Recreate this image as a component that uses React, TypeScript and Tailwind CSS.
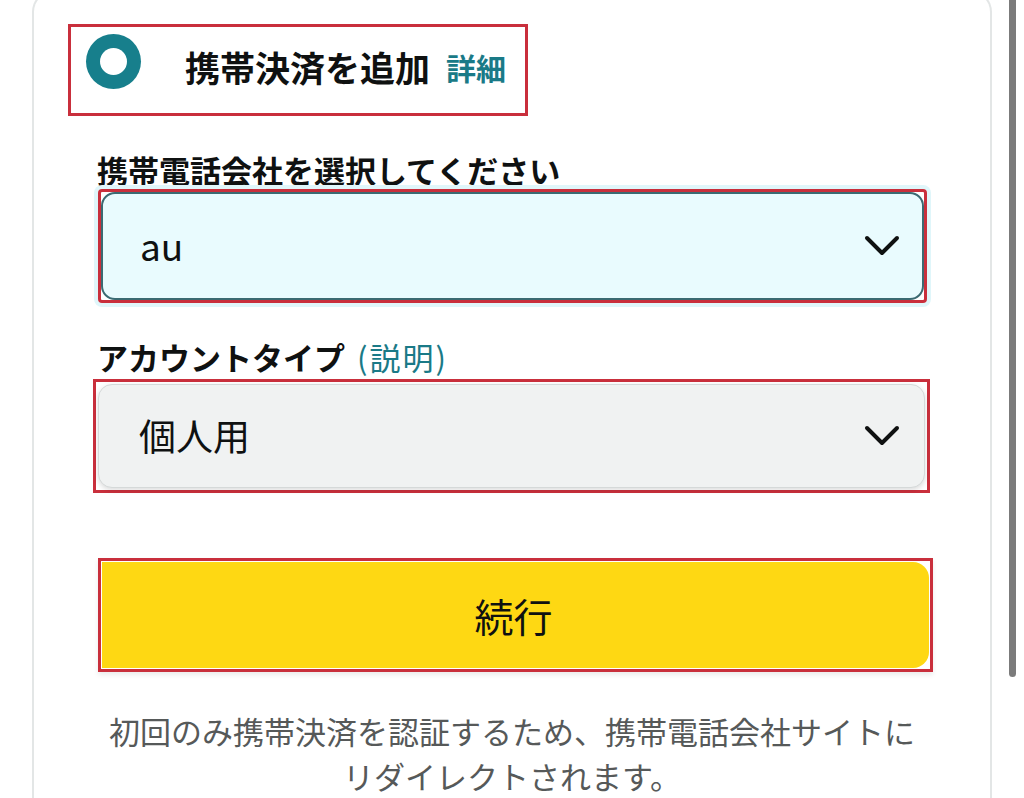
const font = { fontFamily: '"Noto Sans CJK JP", "Noto Sans", sans-serif' };

function Chevron() {
  return (
    <svg width="36" height="22" viewBox="0 0 36 22" fill="none" className="shrink-0">
      <path d="M3 3 L18 18 L33 3" stroke="#0f1111" strokeWidth="4" strokeLinecap="round" strokeLinejoin="round" />
    </svg>
  );
}

function SelectBox({ value, active }: { value: string; active?: boolean }) {
  return (
    <div
      className={
        active
          ? "flex h-full items-center justify-between rounded-[14px] border-2 border-[#3b6a72] bg-[#e9fbfe] pl-[37px] pr-[22px]"
          : "flex h-full items-center justify-between rounded-[14px] border border-[#d5d9d9] bg-[#f0f2f2] pl-[40px] pr-[24px] shadow-[0_2px_5px_rgba(15,17,17,0.15)]"
      }
    >
      <span className="text-[37px] leading-none text-[#0f1111]">{value}</span>
      <Chevron />
    </div>
  );
}

export default function App() {
  return (
    <div className="flex h-[798px] w-[1024px] overflow-hidden bg-white" style={font}>
      {/* card */}
      <div className="ml-[32px] mt-[-10px] flex w-[960px] shrink-0 flex-col rounded-t-[22px] border-2 border-b-0 border-[#e3e6e6] bg-white">
        {/* annotated radio heading */}
        <div className="ml-[34px] mt-[32px] flex h-[93px] w-[460px] items-center border-[3px] border-[#c92f3c] pl-[15px]">
          <div className="mb-[17px] flex h-[55px] w-[55px] items-center justify-center rounded-full bg-[#177f8c]">
            <div className="h-[27px] w-[27px] rounded-full bg-white" />
          </div>
          <span className="mb-[6px] ml-[44px] text-[35px] font-bold leading-none text-[#0f1111]">
            携帯決済を追加
          </span>
          <span className="mb-[6px] ml-[16px] text-[30px] font-bold leading-none text-[#1a7a87]">詳細</span>
        </div>

        {/* carrier */}
        <div className="ml-[63px] mt-[34px] text-[31px] font-bold leading-[39px] text-[#0f1111]">
          携帯電話会社を選択してください
        </div>
        <div className="ml-[64px] h-[116px] w-[829px] rounded-[4px] border-[3px] border-[#c92f3c] shadow-[0_0_0_4px_#e0f6fa]">
          <SelectBox value="au" active />
        </div>

        {/* account type */}
        <div className="ml-[63px] mt-[33px] flex items-baseline gap-[12px] leading-[41px]">
          <span className="text-[31px] font-bold text-[#0f1111]">アカウントタイプ</span>
          <span className="text-[31px] tracking-[2px] text-[#1a7a87]">(説明)</span>
        </div>
        <div className="ml-[59px] mt-[2px] h-[115px] w-[837px] border-[3px] border-[#c92f3c] p-[2px]">
          <SelectBox value="個人用" />
        </div>

        {/* continue */}
        <div className="ml-[64px] mt-[65px] h-[116px] w-[835px] border-[3px] border-[#c92f3c] p-[1px] shadow-[0_3px_5px_rgba(15,17,17,0.08)]">
          <div className="flex h-full items-center justify-center rounded-r-[16px] bg-[#fed813] pr-[4px] text-[39px] text-[#0f1111]">
            続行
          </div>
        </div>

        <p className="mt-[36px] text-center text-[31px] leading-[45px] text-[#565959]">
          初回のみ携帯決済を認証するため、携帯電話会社サイトに
          <br />
          リダイレクトされます。
        </p>
      </div>

      {/* scrollbar */}
      <div className="ml-[17px] h-[677px] w-[7px] rounded-b-full bg-[#7b7b7b]" />
    </div>
  );
}
